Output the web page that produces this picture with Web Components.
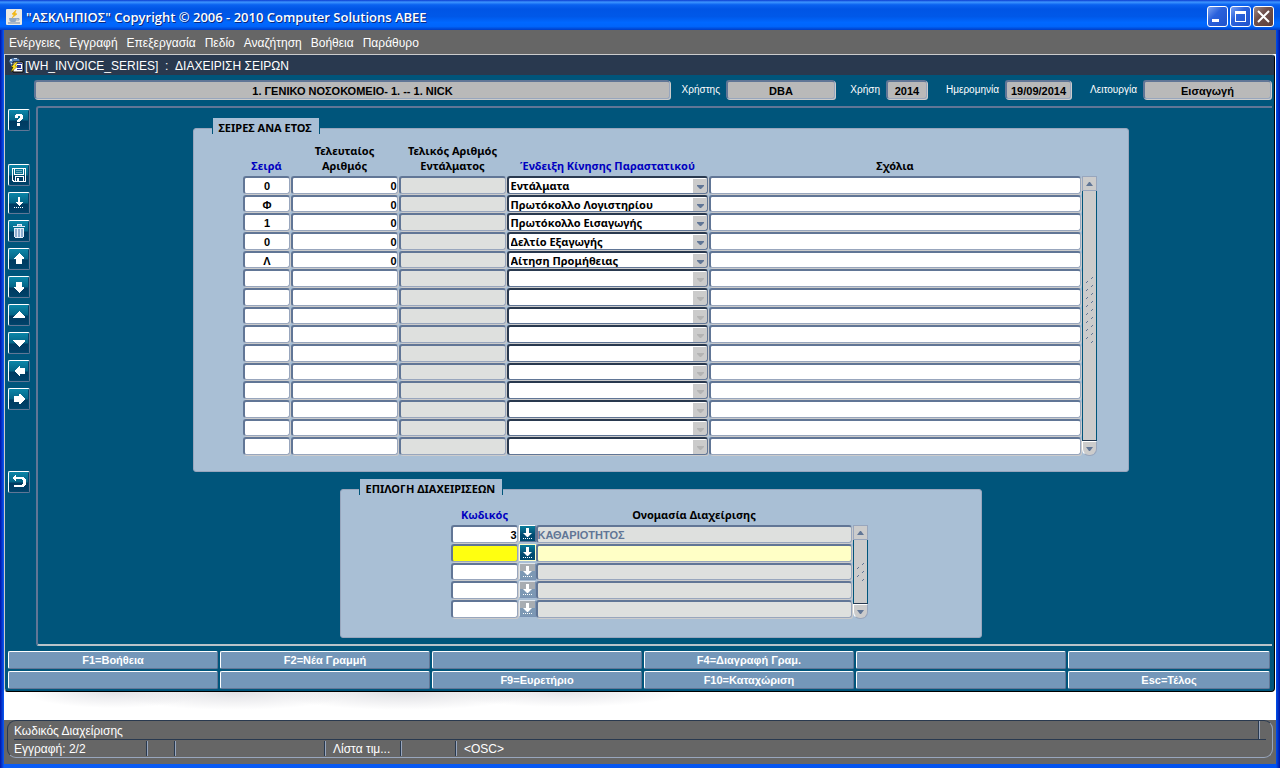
<!DOCTYPE html>
<html lang="el">
<head>
<meta charset="utf-8">
<title>ΑΣΚΛΗΠΙΟΣ - Διαχείριση Σειρών</title>
<style>
  body { margin: 0; font: 12px/16px "Liberation Sans", Arial, sans-serif; color: #fff; background: #fff; }
  body {
    --teal: #00557b; --panel: #a9bfd5; --edge: #617696; --soft: #98a6bd; --light: #ccc; --navy: #29394f;
    --bold: bold 11px/15px "Liberation Sans", "Noto Sans", sans-serif;
    --greek: bold 11px/15px "Noto Sans", "Open Sans", sans-serif;
  }
</style>
</head>
<body>
<app-window></app-window>

<script>
const define = (tag, css, html) => {
  const tpl = document.createElement('template');
  const build = typeof html === 'function' ? html : () => html;
  customElements.define(tag, class extends HTMLElement {
    connectedCallback() {
      if (this.shadowRoot) return;
      tpl.innerHTML = `<style>*{box-sizing:border-box}${css}</style>${build(this)}`;
      this.attachShadow({ mode: 'open' }).append(tpl.content.cloneNode(true));
    }
  });
};

const fieldCss = `
  input, select {
    display: block; appearance: none; min-width: 0; margin: 0; outline: 0; color: #000;
    border: 2px solid var(--edge); border-right: 1px solid var(--soft); border-bottom: 1px solid var(--soft);
    border-radius: 3px; box-shadow: 1px 1px 0 var(--light); background: #fff; font: var(--bold);
  }`;

/* ---------- icons of the vertical toolbar, on a 22 x 22 grid ---------- */
const ICONS = {
  help: '<path d="M7 8V6h1V5h6v1h1v4h-1v1h-1v1h-1v1h-3v-2h1v-1h1V9h1V7h-2v2H7zM9 14h3v3H9z"/>',
  save: '<path fill-rule="evenodd" d="M4 4h14v14H5l-1-1zM5 5v11l1 1h1v-5h9v5h1V5h-1v6H6V5zM7 5v5h8V5zM8 13v4h1v-3h2v3h4v-4z"/><path d="M8 6h6v1H8zM8 8h6v1H8z" opacity=".4"/>',
  drop: '<path d="M10 5h2v5h3l-4 4-4-4h3z"/><path d="M6 15h1v1H6zM8 15h1v1H8zM10 15h1v1h-1zM12 15h1v1h-1zM14 15h1v1h-1z"/>',
  bin: '<path fill="#8faed0" stroke="#e6eef8" d="M6.500 8.500h9v8l-1 1h-7l-1-1zM5 6.500h12M9 5.500v-1h4v1"/><path stroke="#e6eef8" d="M9.500 9v8M12.500 9v8"/>',
  up: '<path d="M11 5l5 5v1h-2v5H8v-5H6v-1z"/>',
  down: '<path d="M8 6h6v5h2v1l-5 5-5-5v-1h2z"/>',
  first: '<path d="M11 7l6 6v1H5v-1z"/>',
  last: '<path d="M5 8h12v1l-6 6-6-6z"/>',
  left: '<path d="M6 11l5-5h1v2h5v6h-5v2h-1z"/>',
  right: '<path d="M17 11l-5-5h-1v2H6v6h5v2h1z"/>',
  back: '<path d="M8 4v2h6q4 .5 4 5t-4 5H6v-2h7q2.500-.5 2.500-3T13 8H8v2H7L4 7l3-3z"/>'
};

define('tool-button', `
  :host { display: block; }
  button { display: block; width: 22px; height: 22px; padding: 0; border: 1px solid; border-color: #fff var(--edge) var(--edge) #fff;
    border-radius: 2px; background: linear-gradient(#0b86a8, #036486 50%, #003a60 55%, #00426a); box-shadow: inset -1px -1px 0 #00476c; }
  svg { display: block; width: 22px; height: 22px; margin: -1px; fill: #fff; }`,
  el => `<button type="button" aria-label="${el.getAttribute('label')}"><svg viewBox="0 0 22 22" shape-rendering="crispEdges">${ICONS[el.getAttribute('icon')]}</svg></button>`);

define('tool-rail', `
  :host { display: flex; flex-direction: column; gap: 6px; }
  .next { margin-top: 27px; } .end { margin-top: 55px; }`, `
  <tool-button icon="help" label="Βοήθεια"></tool-button>
  <tool-button class="next" icon="save" label="Καταχώριση"></tool-button>
  <tool-button icon="drop" label="Εισαγωγή"></tool-button>
  <tool-button icon="bin" label="Διαγραφή"></tool-button>
  <tool-button icon="up" label="Προηγούμενη"></tool-button>
  <tool-button icon="down" label="Επόμενη"></tool-button>
  <tool-button icon="first" label="Πάνω"></tool-button>
  <tool-button icon="last" label="Κάτω"></tool-button>
  <tool-button icon="left" label="Αριστερά"></tool-button>
  <tool-button icon="right" label="Δεξιά"></tool-button>
  <tool-button class="end" icon="back" label="Επιστροφή"></tool-button>`);

/* ---------- title bar and menu ---------- */
define('title-bar', `
  :host { display: flex; align-items: center; height: 30px; padding: 3px 6px 0; gap: 4px;
    background: linear-gradient(#0a3bd0, #3d95ff 7%, #0a62f0 16%, #0055e5 30%, #0058e8 55%, #0068ff 75%, #0065fb 88%, #003dc5); }
  h1 { flex: 1; margin: 0; font: 600 13px/18px "Open Sans", sans-serif; text-shadow: 1px 1px 0 #0a2a80; white-space: pre; }
  svg { display: block; }
  div { display: flex; gap: 2px; }
  button { width: 21px; height: 21px; padding: 0; border: 1px solid #fff; border-radius: 3px; background: linear-gradient(135deg, #7ba2f2, #2b62dc 40%, #1f52cc); }
  .close { background: linear-gradient(135deg, #a08a86, #6f504c 40%, #5d3f3c); }`, `
  <svg width="16" height="16" viewBox="0 0 16 16"><rect width="16" height="16" rx="1" fill="#eceae4"/><path d="M10 1L6 5l2 1-2 3 5-4-2-1z" fill="#f2b818" stroke="#f2b818" stroke-width=".6"/><path d="M3 9h8q0 3-2 4H5Q3 12 3 9z" fill="#8fa6c4"/><path d="M11 9.500h2v1.500h-2" fill="none" stroke="#8fa6c4"/><path d="M2 14h12" stroke="#6f87a8"/></svg>
  <h1>"ΑΣΚΛΗΠΙΟΣ" Copyright © 2006 - 2010 Computer Solutions ΑΒΕΕ</h1>
  <div>
    <button type="button" aria-label="Ελαχιστοποίηση"><svg width="19" height="19"><path d="M4 12h7v3H4z" fill="#fff"/></svg></button>
    <button type="button" aria-label="Μεγιστοποίηση"><svg width="19" height="19"><path d="M4 4h11v11H4zM5 7v7h9V7z" fill="#fff" fill-rule="evenodd"/></svg></button>
    <button type="button" class="close" aria-label="Κλείσιμο"><svg width="19" height="19"><path d="M4 4l11 11M15 4L4 15" stroke="#fff" stroke-width="2"/></svg></button>
  </div>`);

define('menu-bar', `
  :host { display: flex; gap: 9px; height: 24px; padding: 5px 5px 0; background: #666; }
  a { color: #fff; text-decoration: none; white-space: nowrap; }`,
  ['Ενέργειες', 'Εγγραφή', 'Επεξεργασία', 'Πεδίο', 'Αναζήτηση', 'Βοήθεια', 'Παράθυρο'].map(t => `<a href="#">${t}</a>`).join(''));

/* ---------- context fields above the form ---------- */
define('context-field', `
  :host { display: flex; align-items: center; }
  label { width: var(--lw); padding-right: 6px; font: 10px/14px "Liberation Sans", sans-serif; text-align: right; white-space: nowrap; }
  ${fieldCss}
  input { flex: 1; width: 0; height: 19px; padding: 1px 0 0; background: #b9b9b9; text-align: center; }`,
  el => {
    const label = el.getAttribute('label');
    return `${label ? `<label for="f">${label}</label>` : ''}<input id="f" readonly aria-label="${label || 'Οργανισμός'}" value="${el.getAttribute('value')}">`;
  });

define('context-row', `
  :host { display: grid; grid-template-columns: 1fr 165px 92px 144px 200px; padding-left: 29px; }`, `
  <context-field value="1. ΓΕΝΙΚΟ ΝΟΣΟΚΟΜΕΙΟ- 1. -- 1. NICK"></context-field>
  <context-field style="--lw:56px" label="Χρήστης" value="DBA"></context-field>
  <context-field style="--lw:51px" label="Χρήση" value="2014"></context-field>
  <context-field style="--lw:78px" label="Ημερομηνία" value="19/09/2014"></context-field>
  <context-field style="--lw:72px" label="Λειτουργία" value="Εισαγωγή"></context-field>`);

/* ---------- group box ---------- */
define('group-panel', `
  :host { display: block; }
  h2 { width: max-content; margin: 0 0 -6px 19px; padding: 2px 7px 0 6px; position: relative; height: 16px; border-right: 1px solid var(--teal); border-left: 1px solid var(--teal); background: var(--panel); color: #000; font: var(--greek); line-height: 16px; }
  section { display: flex; border: 1px solid var(--soft); border-radius: 3px; background: var(--panel); }`, el => `
  <h2>${el.getAttribute('heading')}</h2><section><slot></slot></section>`);

/* ---------- block scroll bar ---------- */
define('block-scroll', `
  :host { display: flex; flex-direction: column; width: 15px; }
  button { height: 15px; padding: 0; border: 1px solid var(--soft); background: var(--light); }
  button:first-child { border-radius: 7px 7px 0 0; border-color: #fff var(--soft) var(--edge) #fff; }
  button:last-child { border-radius: 0 0 7px 7px; border-top-color: #fff; border-left-color: #fff; }
  button svg { display: block; margin: 0 auto; fill: var(--edge); }
  div { flex: 1; display: grid; place-items: center; border: 1px solid var(--teal); border-width: 0 1px 1px; border-bottom-color: var(--navy); background: var(--light); }
  :host([grips="9"]) div { padding-bottom: 12px; }`,
  el => {
    const n = +el.getAttribute('grips');
    let d = '';
    for (let i = 0; i < n; i++) {
      d += `M6 ${i * 8 + 1}h1v-1h1v1h-1v1h-1z`;
      if (i < n - 1) d += `M1 ${i * 8 + 5}h1v-1h1v1h-1v1h-1z`;
    }
    return `<button type="button" aria-label="Πάνω"><svg width="7" height="4"><path d="M3 0h1l3 4H0z"/></svg></button>
      <div><svg width="9" height="${n * 8 - 6}" fill="#617696">${`<path d="${d}"/>`}</svg></div>
      <button type="button" aria-label="Κάτω"><svg width="7" height="4"><path d="M0 0h7L4 4H3z"/></svg></button>`;
  });

const tableCss = `
  table { border-collapse: collapse; table-layout: fixed; }
  th { padding: 0 0 3px; vertical-align: bottom; color: #000; font: var(--greek); white-space: nowrap; }
  th.key { color: #0000c0; }
  td { height: 19px; padding: 0; vertical-align: top; }
  .short td { height: 18px; }
  ${fieldCss}
  input, select { width: calc(100% - 1px); height: 18px; padding: 1px 0 0 1px; }
  .short input, .short select { height: 17px; }
  .right { text-align: right; } .mid { text-align: center; } .off { background: #dee0de; }`;

/* ---------- series per year ---------- */
const series = [['0', '0', 'Εντάλματα'], ['Φ', '0', 'Πρωτόκολλο Λογιστηρίου'], ['1', '0', 'Πρωτόκολλο Εισαγωγής'], ['0', '0', 'Δελτίο Εξαγωγής'], ['Λ', '0', 'Αίτηση Προμήθειας']];
const arrow = c => `url("data:image/svg+xml,%3Csvg xmlns='http://www.w3.org/2000/svg' width='14' height='15'%3E%3Cpath fill='%23cbcbcb' d='M0 1h14v14H0z'/%3E%3Cpath fill='%23${c}' d='M4 7h7v1L8 11H7L4 8z'/%3E%3C/svg%3E")`;
define('series-table', `
  :host { display: flex; align-items: flex-end; padding: 14px 31px 15px 49px; }
  ${tableCss}
  select, .short select { border-color: var(--navy) var(--edge) var(--edge) var(--navy); padding: 0 14px 0 2px; font: var(--greek); background: #fff ${arrow('617696')} no-repeat right top; }
  select.none, .short select.none { background-image: ${arrow('b3b3b3')}; }
  thead tr { height: 33px; }`, () => `
  <table style="width:839px">
    <colgroup><col style="width:48px"><col style="width:108px"><col style="width:108px"><col style="width:202px"><col></colgroup>
    <thead><tr><th class="key">Σειρά</th><th>Τελευταίος<br>Αριθμός</th><th>Τελικός Αριθμός<br>Εντάλματος</th><th class="key">Ένδειξη Κίνησης Παραστατικού</th><th>Σχόλια</th></tr></thead>
    <tbody>${Array.from({ length: 15 }, (_, i) => {
      const [a, b, c] = series[i] || ['', '', ''];
      return `<tr class="${i % 3 === 1 ? 'short' : ''}"><td><input class="mid" aria-label="Σειρά" value="${a}"></td><td><input class="right" aria-label="Τελευταίος Αριθμός" value="${b}"></td><td><input class="off" readonly aria-label="Τελικός Αριθμός Εντάλματος"></td><td><select class="${c ? '' : 'none'}" aria-label="Ένδειξη Κίνησης Παραστατικού"><option>${c}</option></select></td><td><input aria-label="Σχόλια"></td></tr>`;
    }).join('')}</tbody>
  </table>
  <block-scroll grips="9" style="height:280px"></block-scroll>`);

/* ---------- store selection ---------- */
define('store-table', `
  :host { display: flex; align-items: flex-end; padding: 17px 113px 18px 110px; }
  ${tableCss}
  .off { color: var(--edge); padding-left: 0; }
  .now td:nth-child(1) input { background: #ffff10; } .now td:nth-child(3) input { background: #ffffc6; }
  button { display: block; width: 17px; height: 17px; padding: 0; border: 1px solid; border-color: #fff var(--edge) var(--edge) #fff; background: linear-gradient(#0a7d9c, #004a70 60%); }
  button:disabled { background: linear-gradient(#a8adb2 50%, #7c98b4 50%); border-color: #dfe6ee #7a93b4 #7a93b4 #dfe6ee; }
  .now button { border-color: #ffffc6; }
  svg { display: block; fill: #fff; }`, () => `
  <table style="width:402px">
    <colgroup><col style="width:68px"><col style="width:17px"><col></colgroup>
    <thead><tr><th class="key">Κωδικός</th><th></th><th>Ονομασία Διαχείρισης</th></tr></thead>
    <tbody>${[0, 1, 2, 3, 4].map(i => `<tr class="${i === 2 ? 'short' : ''}${i === 1 ? 'now' : ''}"><td><input class="right" aria-label="Κωδικός" value="${i ? '' : '3'}"></td><td><button type="button" aria-label="Λίστα" ${i > 1 ? 'disabled' : ''}><svg width="15" height="15"><path d="M6 2h3v5h3l-4 4h-1L3 7h3zM3 12h1v1H3zM5 12h1v1H5zM7 12h1v1H7zM9 12h1v1H9zM11 12h1v1h-1z"/></svg></button></td><td><input class="off" readonly aria-label="Ονομασία Διαχείρισης" value="${i ? '' : 'ΚΑΘΑΡΙΟΤΗΤΟΣ'}"></td></tr>`).join('')}</tbody>
  </table>
  <block-scroll grips="3" style="height:94px"></block-scroll>`);

/* ---------- function keys ---------- */
define('function-keys', `
  :host { display: grid; grid-template-columns: repeat(5, 210fr) 202fr; gap: 2px; padding: 5px 4px 2px 3px; }
  button { min-width: 0; height: 18px; padding: 0; border: 1px solid; border-color: #fff var(--edge) var(--edge) #fff; border-radius: 2px;
    background: #7497b9; color: #fff; font: var(--bold); line-height: 16px; }`,
  ['F1=Βοήθεια', 'F2=Νέα Γραμμή', '', 'F4=Διαγραφή Γραμ.', '', '', '', '', 'F9=Ευρετήριο', 'F10=Καταχώριση', '', 'Esc=Τέλος']
    .map((t, i) => `<button type="button" ${t ? '' : `aria-label="Πλήκτρο ${i + 1}"`}>${t}</button>`).join(''));

/* ---------- inner form window ---------- */
define('form-window', `
  :host { display: block; border-top: 1px solid var(--light); border-left: 1px solid var(--light); border-right: 1px solid #000; border-bottom: 1px solid #000;
    border-radius: 0 4px 4px 4px; overflow: hidden; margin-right: 1px; background: var(--teal); }
  header { display: flex; align-items: center; gap: 1px; height: 20px; padding-left: 3px; background: var(--navy); white-space: pre; }
  header span { padding-top: 2px; }
  context-row { margin: 5px 3px 0 0; }
  main { display: grid; grid-template-columns: 31px 1fr; margin: 7px 2px 0 0; }
  tool-rail { width: 25px; padding: 3px 0 0 3px; }
  .form { display: flex; flex-direction: column; align-items: center; gap: 7px; padding: 10px 0 6px 11px;
    border: 2px solid var(--edge); border-right: 0; border-bottom: 2px solid #b9c3c9; border-radius: 3px 0 0 3px; }`, `
  <header><svg width="16" height="16" viewBox="0 0 16 16"><path d="M1 4Q4-1 11 2l1 3-8 5z" fill="#5580b8"/><path d="M2 2h2v2H2zM6 1h3v1H6zM3 6h2v1H3z" fill="#d5e3f2"/><path d="M5 5h10v10H5z" fill="#fff" stroke="#000"/><path d="M8 6h6v1H8zM9 8h4v3H9zM9 12h5v1H9z" fill="#26369e"/><path d="M8 5L3 10h2l-2 5 7-6H7l3-4z" fill="#ffe020" stroke="#332d00" stroke-width=".4"/></svg><span>[WH_INVOICE_SERIES]  :  ΔΙΑΧΕΙΡΙΣΗ ΣΕΙΡΩΝ</span></header>
  <context-row></context-row>
  <main>
    <tool-rail></tool-rail>
    <div class="form">
      <group-panel heading="ΣΕΙΡΕΣ ΑΝΑ ΕΤΟΣ"><series-table></series-table></group-panel>
      <group-panel heading="ΕΠΙΛΟΓΗ ΔΙΑΧΕΙΡΙΣΕΩΝ"><store-table></store-table></group-panel>
    </div>
  </main>
  <function-keys></function-keys>`);

/* ---------- status bar ---------- */
define('status-bar', `
  :host { display: block; padding: 0 3px 6px; background: #666; }
  .frame { padding: 0 6px; border: 1px solid; border-color: var(--navy) var(--soft) var(--soft) var(--navy); border-radius: 9px; }
  .row { display: flex; height: 18px; line-height: 20px; }
  .row + .row { border-top: 1px solid var(--navy); line-height: 18px; }
  .row + .row span { margin: 1px 0; line-height: 16px; }
  span { flex: none; border-right: 1px solid var(--soft); box-shadow: inset -1px 0 0 var(--navy); white-space: nowrap; }
  .wide { flex: 1; margin-right: 6px; }
  span:last-child:not(.wide) { border: 0; box-shadow: none; }`, `
  <div class="frame">
    <div class="row"><span class="wide">Κωδικός Διαχείρισης</span></div>
    <div class="row"><span style="width:134px">Εγγραφή: 2/2</span><span style="width:28px"></span><span style="width:150px"></span><span style="width:76px;padding-left:7px">Λίστα τιμ...</span><span style="width:55px"></span><span style="padding-left:7px">&lt;OSC&gt;</span></div>
  </div>`);

define('app-window', `
  :host { display: flex; flex-direction: column; min-height: 100vh; }
  .body { flex: 1; display: flex; flex-direction: column; border: 4px solid #0048e0; border-top: 0; border-image: linear-gradient(90deg, #0014a8, #0a5cf5 4px, #0050ee calc(100% - 4px), #0014a0) 4; }
  .desk { flex: 1; background:
    radial-gradient(90px 16px at 110px 0, #e2e2e6, transparent), radial-gradient(120px 18px at 230px 0, #e0e0e4, transparent),
    radial-gradient(130px 18px at 400px 0, #dedee2, transparent), radial-gradient(120px 15px at 560px 0, #e4e4e8, transparent), #fff; }`, `
  <title-bar></title-bar>
  <div class="body">
    <menu-bar></menu-bar>
    <form-window></form-window>
    <div class="desk"></div>
    <status-bar></status-bar>
  </div>`);
</script>
</body>
</html>
